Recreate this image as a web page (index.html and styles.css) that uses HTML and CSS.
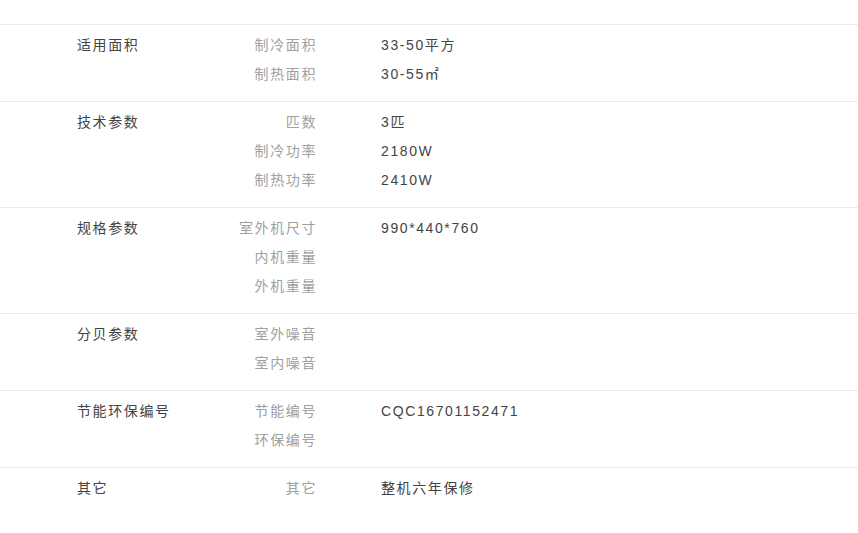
FILE: index.html
```html
<!DOCTYPE html>
<html>
<head>
    <title>规格参数</title>
    <link rel="stylesheet" href="styles.css">
</head>
<body>
    <div class="spec-table">
        <div class="spec-group">
            <div class="group-name">适用面积</div>
            <div class="group-items">
                <div class="item"><span class="key">制冷面积</span><span class="val">33-50平方</span></div>
                <div class="item"><span class="key">制热面积</span><span class="val">30-55㎡</span></div>
            </div>
        </div>

        <div class="spec-group">
            <div class="group-name">技术参数</div>
            <div class="group-items">
                <div class="item"><span class="key">匹数</span><span class="val">3匹</span></div>
                <div class="item"><span class="key">制冷功率</span><span class="val">2180W</span></div>
                <div class="item"><span class="key">制热功率</span><span class="val">2410W</span></div>
            </div>
        </div>

        <div class="spec-group">
            <div class="group-name">规格参数</div>
            <div class="group-items">
                <div class="item"><span class="key">室外机尺寸</span><span class="val">990*440*760</span></div>
                <div class="item"><span class="key">内机重量</span><span class="val"></span></div>
                <div class="item"><span class="key">外机重量</span><span class="val"></span></div>
            </div>
        </div>

        <div class="spec-group">
            <div class="group-name">分贝参数</div>
            <div class="group-items">
                <div class="item"><span class="key">室外噪音</span><span class="val"></span></div>
                <div class="item"><span class="key">室内噪音</span><span class="val"></span></div>
            </div>
        </div>

        <div class="spec-group">
            <div class="group-name">节能环保编号</div>
            <div class="group-items">
                <div class="item"><span class="key">节能编号</span><span class="val">CQC16701152471</span></div>
                <div class="item"><span class="key">环保编号</span><span class="val"></span></div>
            </div>
        </div>

        <div class="spec-group">
            <div class="group-name">其它</div>
            <div class="group-items">
                <div class="item"><span class="key">其它</span><span class="val">整机六年保修</span></div>
            </div>
        </div>
    </div>
</body>
</html>
```

FILE: styles.css
```css
body {
    margin: 0;
    background-color: #fff;
    font-family: "Liberation Sans", Arial, "Noto Sans CJK SC", sans-serif;
    font-size: 14px;
    letter-spacing: 1.6px;
    color: #444;
}

.spec-table {
    padding-top: 24px;
}

.spec-group {
    display: flex;
    border-top: 1px solid #ebebeb;
    padding: 6px 0 12px 77px;
    line-height: 29px;
}

.group-name {
    width: 150px;
    flex-shrink: 0;
}

.item {
    display: grid;
    grid-template-columns: 90px 1fr;
    column-gap: 64px;
}

.key {
    text-align: right;
    color: #a0a0a0;
}

.val {
    color: #444;
}
```
